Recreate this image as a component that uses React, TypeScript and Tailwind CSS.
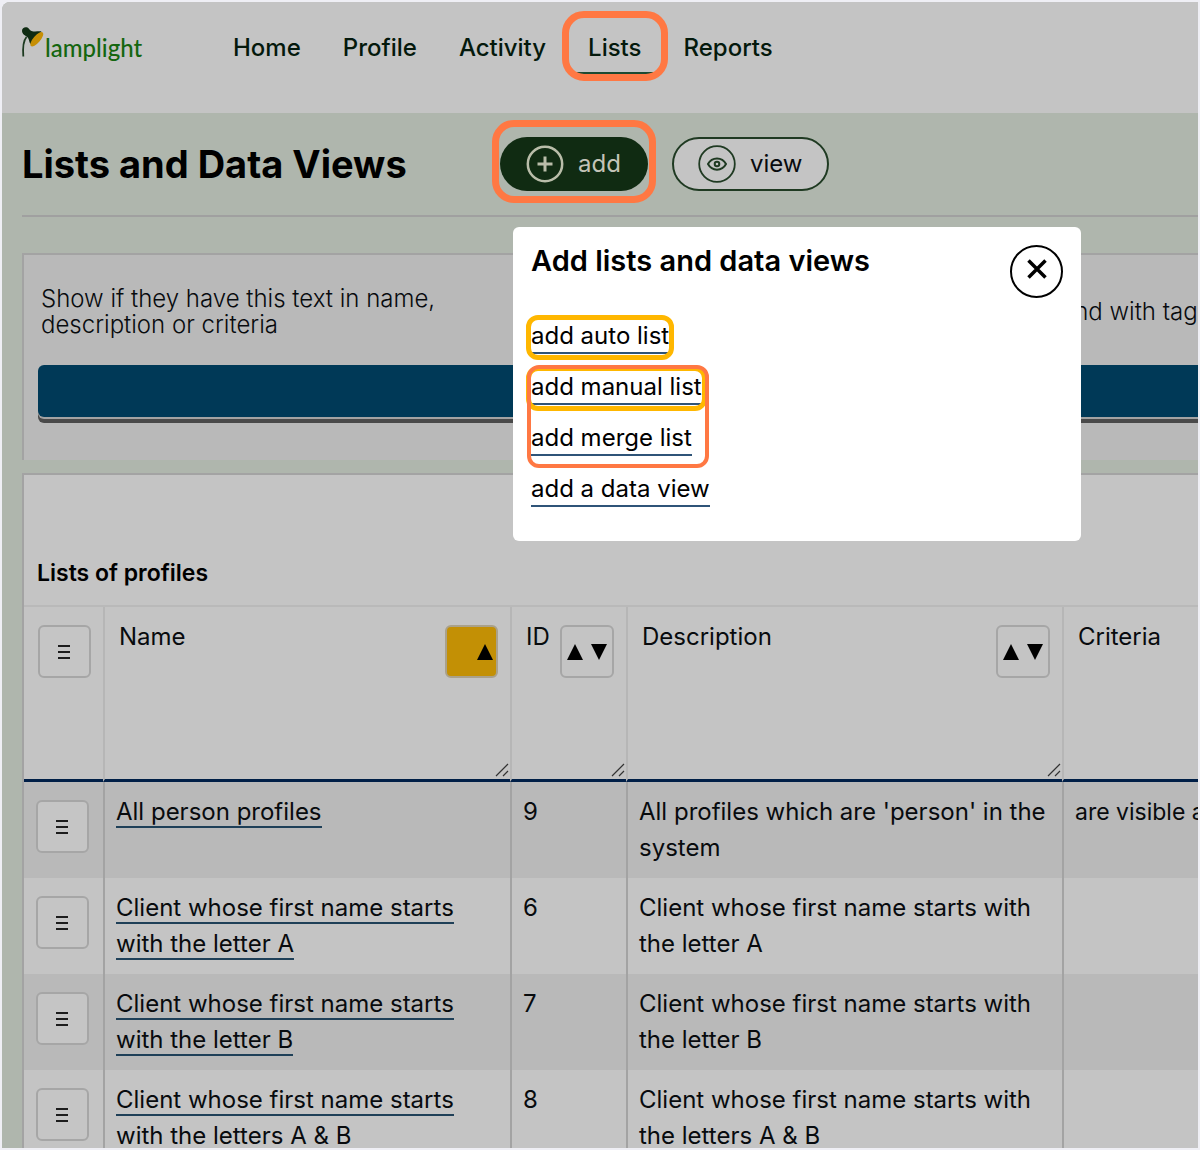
import React from "react";

const navItems = ["Home", "Profile", "Activity", "Lists", "Reports"];

const menuLinks = [
  { label: "add auto list", highlighted: true },
  { label: "add manual list", highlighted: true },
  { label: "add merge list", highlighted: false },
  { label: "add a data view", highlighted: false },
];

const rows = [
  {
    name: "All person profiles",
    id: 9,
    description: "All profiles which are 'person' in the system",
    criteria: "are visible a",
  },
  {
    name: "Client whose first name starts with the letter A",
    id: 6,
    description: "Client whose first name starts with the letter A",
    criteria: "",
  },
  {
    name: "Client whose first name starts with the letter B",
    id: 7,
    description: "Client whose first name starts with the letter B",
    criteria: "",
  },
  {
    name: "Client whose first name starts with the letters A & B",
    id: 8,
    description: "Client whose first name starts with the letters A & B",
    criteria: "",
  },
];

function Logo() {
  return (
    <a href="#" className="flex w-[201px] shrink-0 items-start" aria-label="lamplight">
      <svg width="24" height="32" viewBox="0 0 24 32" aria-hidden="true">
        <path d="M5.500 11C2 15 1.600 21 2.300 30.500" fill="none" stroke="#1d3a20" strokeWidth="1.800" />
        <path
          d="M1 5C1 1.800 4 .6 6.500 1.600C8 2.400 8.500 4.200 10.500 5C14 6.200 17.500 4.900 20.500 5.400L9.500 18C8 16 8.200 13 6.500 11.200C5 9.800 1.200 8.800 1 5Z"
          fill="#0f2b12"
        />
        <ellipse cx="15.800" cy="13.200" rx="9" ry="3.500" transform="rotate(-49 15.800 13.200)" fill="#c68f05" />
      </svg>
      <span className="mt-2 font-['Lato'] text-[24px] leading-7 font-medium text-[#14660f]">lamplight</span>
    </a>
  );
}

function MenuButton({ label }: { label: string }) {
  return (
    <button
      type="button"
      aria-label={label}
      className="flex h-[53px] w-[53px] items-center justify-center rounded-md border-2 border-[#a6a6a6] bg-[#c5c5c5] pr-[2px]"
    >
      <svg width="12" height="14" viewBox="0 0 12 14" stroke="#1c1c1c" strokeWidth="1.800" aria-hidden="true">
        <path d="M0 1H12M0 7H12M0 13H12" />
      </svg>
    </button>
  );
}

function SortButton({ label, ascending = false }: { label: string; ascending?: boolean }) {
  return (
    <button
      type="button"
      aria-label={label}
      className={
        ascending
          ? "flex h-[53px] w-[53px] shrink-0 items-center justify-end rounded-md border-2 border-[#aaa18a] bg-[#c39005] pr-[3px]"
          : "flex h-[53px] w-[54px] shrink-0 items-center justify-center gap-2 rounded-md border-2 border-[#a6a6a6]"
      }
    >
      <svg width="16" height="16" viewBox="0 0 16 16" aria-hidden="true">
        <path d="M8 0L16 16H0Z" />
      </svg>
      {!ascending && (
        <svg width="16" height="16" viewBox="0 0 16 16" aria-hidden="true">
          <path d="M8 16L0 0H16Z" />
        </svg>
      )}
    </button>
  );
}

function HeaderCell({
  label,
  sortable = true,
  ascending = false,
}: {
  label: string;
  sortable?: boolean;
  ascending?: boolean;
}) {
  return (
    <th
      scope="col"
      className="relative h-[175px] border-b-[3px] border-l-2 border-[#b6b6b6] border-b-[#001f47] pt-3 pr-3 pl-[14px] text-left align-top font-normal"
    >
      <div className="flex items-start justify-between">
        <span>{label}</span>
        {sortable && (
          <span className="flex pt-[6px]">
            <SortButton label={`Sort by ${label}`} ascending={ascending} />
          </span>
        )}
      </div>
      {sortable && (
        <svg
          className="absolute right-[1px] bottom-[2px]"
          width="14"
          height="14"
          viewBox="0 0 14 14"
          stroke="#333"
          strokeWidth="1.200"
          aria-hidden="true"
        >
          <path d="M1 13L13 1M8 13L13 8" />
        </svg>
      )}
    </th>
  );
}

function AddDialog() {
  return (
    <div
      role="dialog"
      aria-label="Add lists and data views"
      className="absolute top-full left-[13px] z-10 mt-9 w-[568px] rounded-md bg-white px-[18px] pt-4 pb-[26px] text-black"
    >
      <div className="flex items-start justify-between">
        <h2 className="text-[29px] leading-9 font-semibold">Add lists and data views</h2>
        <button
          type="button"
          aria-label="Close"
          className="mt-[2px] flex h-[53px] w-[53px] items-center justify-center rounded-full border-2 border-black pb-[6px]"
        >
          <svg width="20" height="20" viewBox="0 0 20 20" stroke="#000" strokeWidth="3.500" aria-hidden="true">
            <path d="M1.500 1.500L18.500 18.500M18.500 1.500L1.500 18.500" />
          </svg>
        </button>
      </div>
      <ul className="relative mt-[13px]">
        {menuLinks.map((link) => (
          <li key={link.label} className="flex h-[51px] items-center">
            <a href="#" className="relative border-b-2 border-[#2f5478] leading-8">
              {link.label}
              {link.highlighted && (
                <span className="pointer-events-none absolute -inset-x-[5px] -top-[5px] -bottom-[8px] rounded-xl border-[5px] border-[#ffb700]" />
              )}
            </a>
          </li>
        ))}
        <li
          aria-hidden="true"
          className="pointer-events-none absolute top-[54px] -left-[4px] h-[103px] w-[182px] rounded-xl border-4 border-[#ff7843]"
        />
      </ul>
    </div>
  );
}

export default function App() {
  return (
    <div className="h-screen overflow-hidden bg-[#efeff5] p-[2px] font-['Inter',sans-serif] text-[24px] leading-9 text-[#080b0e]">
      <div className="h-full overflow-hidden rounded-tl-lg bg-[#afb6ad]">
        <header className="flex h-[111px] items-start bg-[#c4c4c4] pt-6 pl-[19px]">
          <Logo />
          <nav className="flex gap-5 pt-1 font-medium text-[#04190c]">
            {navItems.map((item) => (
              <a
                key={item}
                href="#"
                className={
                  item === "Lists"
                    ? "relative border-b-2 border-[#1d4a32] px-[11px] pb-[6px]"
                    : "px-[11px] pb-[6px]"
                }
              >
                {item}
                {item === "Lists" && (
                  <span className="pointer-events-none absolute -inset-x-[15px] -top-[19px] -bottom-[9px] rounded-[22px] border-[7px] border-[#ff7843]" />
                )}
              </a>
            ))}
          </nav>
        </header>

        <main className="pl-5">
          <div className="flex h-[104px] items-center border-b-2 border-[#a0a0a0]">
            <h1 className="w-[478px] shrink-0 text-[38px] font-bold text-black">Lists and Data Views</h1>
            <div className="relative">
              <button
                type="button"
                className="flex h-[54px] w-[148px] items-center gap-[14px] rounded-full bg-[#102b12] pl-[26px] text-[#c4c4b8]"
              >
                <svg width="38" height="38" viewBox="0 0 38 38" fill="none" stroke="#b9bda9" aria-hidden="true">
                  <circle cx="19" cy="19" r="17.200" strokeWidth="2.500" />
                  <path d="M11.500 19H26.500M19 11.500V26.500" strokeWidth="3" />
                </svg>
                add
              </button>
              <span className="pointer-events-none absolute -top-[17px] -right-[8px] -bottom-[12px] -left-[8px] rounded-[22px] border-[7px] border-[#ff7843]" />
              <AddDialog />
            </div>
            <button
              type="button"
              className="ml-6 flex h-[54px] w-[157px] items-center gap-[14px] rounded-full border-2 border-[#1f3a22] bg-[#c4c4c4] pl-6"
            >
              <svg width="38" height="38" viewBox="0 0 38 38" fill="none" stroke="#1f3a22" aria-hidden="true">
                <circle cx="19" cy="19" r="17.800" strokeWidth="1.800" />
                <path d="M10 19C14 11.500 24 11.500 28 19C24 26.500 14 26.500 10 19Z" strokeWidth="2" />
                <circle cx="19" cy="19" r="2.300" strokeWidth="2" />
              </svg>
              view
            </button>
          </div>

          <section className="mt-9 flex h-[207px] border-t-2 border-l-2 border-[#a3a3a3] bg-[#b9b9b9] pl-[14px] leading-[26px] font-light">
            <div className="min-w-0 flex-1">
              <div className="flex h-[110px] items-center pt-1 pl-[3px]">
                <label htmlFor="text-filter" className="max-w-[420px]">
                  Show if they have this text in name, description or criteria
                </label>
              </div>
              <input
                id="text-filter"
                type="text"
                className="block h-[52px] w-full rounded-md bg-[#003957] px-3 text-white shadow-[0_2px_0_#a3a3a3,0_6px_0_#4a4a4a] outline-none"
              />
            </div>
            <div className="w-[137px] shrink-0">
              <div className="flex h-[110px] items-center pt-1">
                <label htmlFor="tag-filter" className="whitespace-nowrap">
                  and with tag
                </label>
              </div>
              <input
                id="tag-filter"
                type="text"
                className="block h-[52px] w-full bg-[#003957] px-3 text-white shadow-[0_2px_0_#a3a3a3,0_6px_0_#4a4a4a] outline-none"
              />
            </div>
          </section>

          <section className="mt-[13px] border-t-2 border-l-2 border-[#a3a3a3] bg-[#c4c4c4]">
            <h2 className="px-[13px] pt-20 pb-[14px] text-[23px] leading-9 font-semibold text-black">
              Lists of profiles
            </h2>
            <table className="w-full table-fixed border-separate border-spacing-0 border-t-2 border-[#b9b9b9]">
              <colgroup>
                <col className="w-[79px]" />
                <col className="w-[407px]" />
                <col className="w-[116px]" />
                <col className="w-[436px]" />
                <col />
              </colgroup>
              <thead>
                <tr>
                  <th
                    scope="col"
                    className="h-[175px] border-b-[3px] border-b-[#001f47] pt-[18px] pl-[14px] align-top"
                  >
                    <MenuButton label="Table options" />
                  </th>
                  <HeaderCell label="Name" ascending />
                  <HeaderCell label="ID" />
                  <HeaderCell label="Description" />
                  <HeaderCell label="Criteria" sortable={false} />
                </tr>
              </thead>
              <tbody>
                {rows.map((row) => (
                  <tr key={row.id} className="align-top odd:bg-[#b9b9b9]">
                    <td className="pt-[18px] pl-3">
                      <MenuButton label={`Options for ${row.name}`} />
                    </td>
                    <td className="border-l-2 border-[#a3a3a3] px-[11px] pt-3 pb-3">
                      <a href="#" className="border-b-2 border-[#1f4058]">
                        {row.name}
                      </a>
                    </td>
                    <td className="border-l-2 border-[#a3a3a3] px-[11px] pt-3 pb-3">{row.id}</td>
                    <td className="border-l-2 border-[#a3a3a3] px-[11px] pt-3 pb-3">{row.description}</td>
                    <td className="overflow-hidden border-l-2 border-[#a3a3a3] pt-3 pb-3 pl-[11px] text-[23px] leading-9 whitespace-nowrap">
                      {row.criteria}
                    </td>
                  </tr>
                ))}
              </tbody>
            </table>
          </section>
        </main>
      </div>
    </div>
  );
}
